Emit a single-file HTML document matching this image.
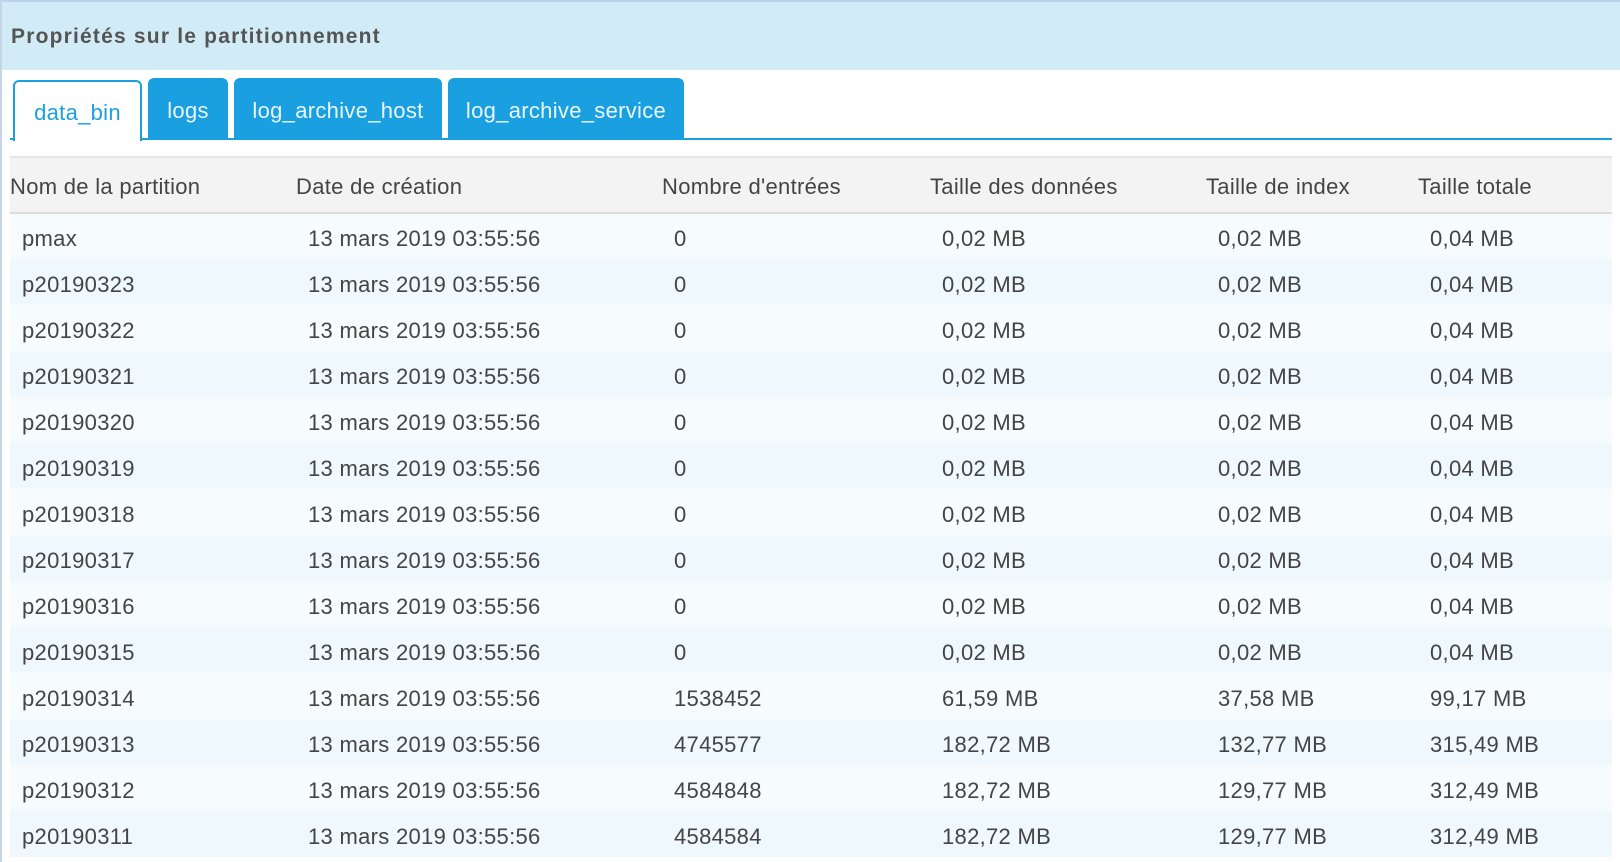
<!DOCTYPE html>
<html><head><meta charset="utf-8"><style>
*{margin:0;padding:0;box-sizing:border-box}
body{width:1620px;height:862px;overflow:hidden;background:#fff;font-family:"Liberation Sans",sans-serif;color:#444;position:relative}
.bar{position:absolute;left:0;top:0;width:1620px;height:70px;background:#d2ecf7;border-top:2px solid #bcd3e6;border-left:2px solid #c5d5e5}
.bar span{position:absolute;left:9px;top:23px;font-size:21px;font-weight:bold;color:#555;letter-spacing:1.2px}
.lb{position:absolute;left:0;top:70px;width:2px;height:792px;background:#c5d5e5}
.tab{position:absolute;top:78px;height:61px;background:#1a9fe0;color:#eaf6fd;font-size:22px;border-radius:6px 6px 0 0;text-align:center;line-height:66px;letter-spacing:0.3px}
.tab.a{top:80px;height:61px;background:#fff;color:#1a9fe0;border:2px solid #1a9fe0;border-bottom:none;line-height:62px;z-index:2}
.line{position:absolute;left:10px;top:138px;width:1602px;height:2px;background:#1a9fe0}
table{position:absolute;left:10px;top:156px;width:1602px;border-collapse:collapse;font-size:22px;letter-spacing:0.3px}
th{font-weight:normal;text-align:left;height:56px;background:#f3f3f3;border-top:2px solid #e6e6e6;border-bottom:2px solid #dcdcdc;color:#444;padding:4px 0 0 0}
td{height:46px;padding:5px 0 0 12px;color:#444}
tr:nth-child(odd) td{background:#f6fcfe}
tr:nth-child(even) td{background:#eef8fd}
</style></head><body>
<div class="bar"><span>Propriétés sur le partitionnement</span></div>
<div class="lb"></div>
<div class="tab a" style="left:13px;width:129px">data_bin</div>
<div class="tab" style="left:148px;width:80px">logs</div>
<div class="tab" style="left:234px;width:208px">log_archive_host</div>
<div class="tab" style="left:448px;width:236px">log_archive_service</div>
<div class="line"></div>
<table>
<colgroup><col style="width:286px"><col style="width:366px"><col style="width:268px"><col style="width:276px"><col style="width:212px"><col></colgroup>
<thead><tr><th>Nom de la partition</th><th>Date de création</th><th>Nombre d'entrées</th><th>Taille des données</th><th>Taille de index</th><th>Taille totale</th></tr></thead>
<tbody>
<tr><td>pmax</td><td>13 mars 2019 03:55:56</td><td>0</td><td>0,02 MB</td><td>0,02 MB</td><td>0,04 MB</td></tr>
<tr><td>p20190323</td><td>13 mars 2019 03:55:56</td><td>0</td><td>0,02 MB</td><td>0,02 MB</td><td>0,04 MB</td></tr>
<tr><td>p20190322</td><td>13 mars 2019 03:55:56</td><td>0</td><td>0,02 MB</td><td>0,02 MB</td><td>0,04 MB</td></tr>
<tr><td>p20190321</td><td>13 mars 2019 03:55:56</td><td>0</td><td>0,02 MB</td><td>0,02 MB</td><td>0,04 MB</td></tr>
<tr><td>p20190320</td><td>13 mars 2019 03:55:56</td><td>0</td><td>0,02 MB</td><td>0,02 MB</td><td>0,04 MB</td></tr>
<tr><td>p20190319</td><td>13 mars 2019 03:55:56</td><td>0</td><td>0,02 MB</td><td>0,02 MB</td><td>0,04 MB</td></tr>
<tr><td>p20190318</td><td>13 mars 2019 03:55:56</td><td>0</td><td>0,02 MB</td><td>0,02 MB</td><td>0,04 MB</td></tr>
<tr><td>p20190317</td><td>13 mars 2019 03:55:56</td><td>0</td><td>0,02 MB</td><td>0,02 MB</td><td>0,04 MB</td></tr>
<tr><td>p20190316</td><td>13 mars 2019 03:55:56</td><td>0</td><td>0,02 MB</td><td>0,02 MB</td><td>0,04 MB</td></tr>
<tr><td>p20190315</td><td>13 mars 2019 03:55:56</td><td>0</td><td>0,02 MB</td><td>0,02 MB</td><td>0,04 MB</td></tr>
<tr><td>p20190314</td><td>13 mars 2019 03:55:56</td><td>1538452</td><td>61,59 MB</td><td>37,58 MB</td><td>99,17 MB</td></tr>
<tr><td>p20190313</td><td>13 mars 2019 03:55:56</td><td>4745577</td><td>182,72 MB</td><td>132,77 MB</td><td>315,49 MB</td></tr>
<tr><td>p20190312</td><td>13 mars 2019 03:55:56</td><td>4584848</td><td>182,72 MB</td><td>129,77 MB</td><td>312,49 MB</td></tr>
<tr><td>p20190311</td><td>13 mars 2019 03:55:56</td><td>4584584</td><td>182,72 MB</td><td>129,77 MB</td><td>312,49 MB</td></tr>
</tbody></table>
</body></html>
